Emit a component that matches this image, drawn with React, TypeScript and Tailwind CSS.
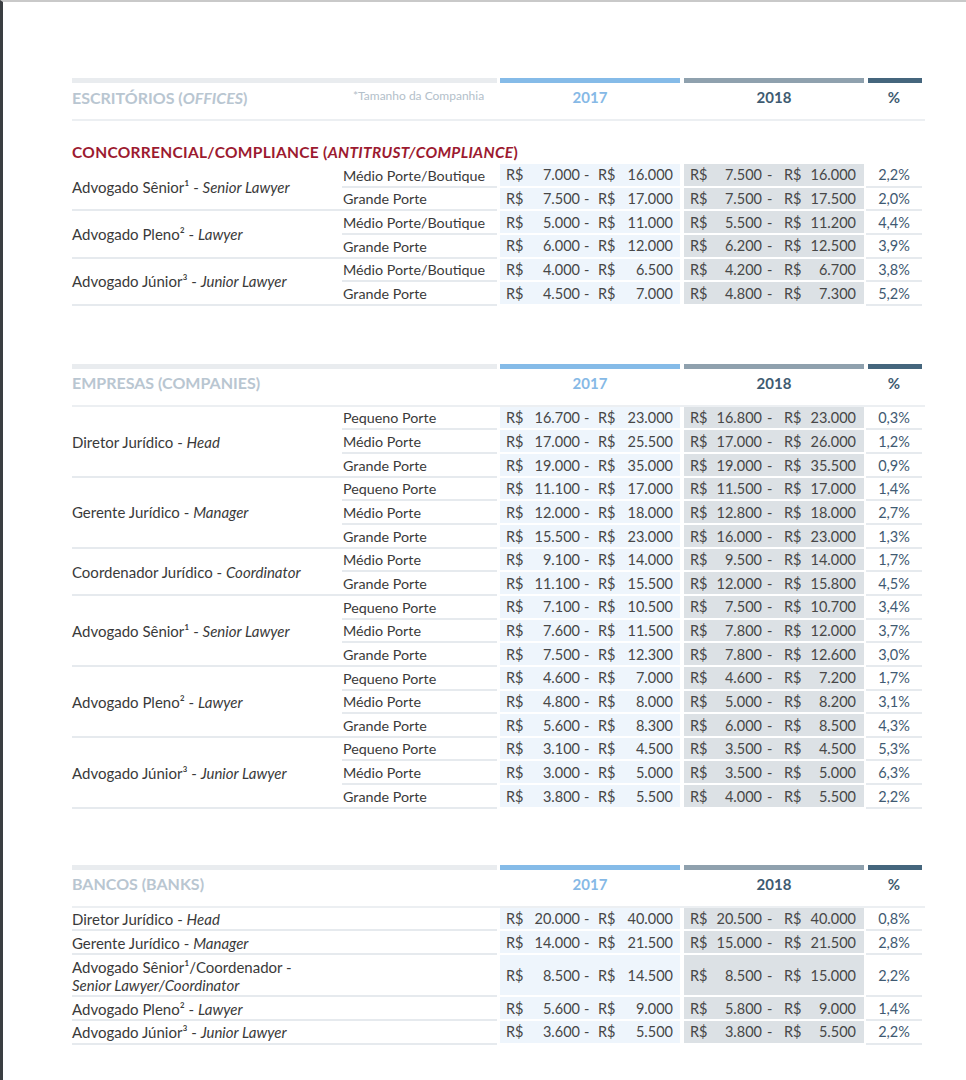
import React from "react";

type Range = [string, string];

interface Item {
  size?: string;
  a: Range;
  b: Range;
  pct: string;
  tall?: boolean;
}

interface Group {
  name: React.ReactNode;
  items: Item[];
}

const font = { fontFamily: "Lato, 'Open Sans', sans-serif" };

function Money({ r, late }: { r: Range; late?: boolean }) {
  // late = the 2018 column, whose figures sit a touch further right
  return (
    <div className="flex items-center pl-[6px] pt-[1px] text-[14.5px] text-[#474747] tabular-nums whitespace-nowrap">
      <span className="w-[16px]">R$</span>
      <span className={`${late ? "w-[56px]" : "w-[58px]"} text-right`}>{r[0]}</span>
      <span className={late ? "w-[22px] pl-[5px]" : "w-[18px] pl-[4px]"}>-</span>
      <span className="w-[16px]">R$</span>
      <span className={`${late ? "w-[56px]" : "w-[59px]"} text-right`}>{r[1]}</span>
    </div>
  );
}

function DataRow({ item }: { item: Item }) {
  const h = item.tall ? "h-[42.3px]" : "h-[23.65px]";
  return (
    <div className={`flex ${h}`}>
      {item.size !== undefined && (
        <div className="w-[155px] flex items-center pl-[1px] pt-[1px] border-b-2 border-[#e6eaee] text-[14.3px] text-[#3a3a3a]">
          {item.size}
        </div>
      )}
      <div className="w-[3px]" />
      <div className="w-[180px] bg-[#eef5fc] border-b-2 border-white flex items-center">
        <Money r={item.a} />
      </div>
      <div className="w-[4px]" />
      <div className="w-[180px] bg-[#dce1e5] border-b-2 border-white flex items-center">
        <Money r={item.b} late />
      </div>
      <div className="w-[2px]" />
      <div className="w-[56px] flex items-center justify-center pt-[1px] border-b-2 border-[#e6eaee] text-[14.5px] text-[#3f5a72] tabular-nums">
        {item.pct}
      </div>
    </div>
  );
}

function GroupBlock({ g }: { g: Group }) {
  return (
    <div className="flex">
      <div className="w-[270px] flex items-center pt-[1px] border-b-2 border-[#e6eaee] text-[15px] text-[#3a3a3a]">
        {g.name}
      </div>
      <div className="flex flex-col">
        {g.items.map((it, i) => (
          <DataRow key={i} item={it} />
        ))}
      </div>
    </div>
  );
}

function SingleRow({ name, item }: { name: React.ReactNode; item: Item }) {
  const h = item.tall ? "h-[42.3px]" : "h-[23.65px]";
  return (
    <div className={`flex ${h}`}>
      <div className="w-[425px] flex flex-col justify-center pt-[1px] border-b-2 border-[#e6eaee] text-[15px] leading-[18px] text-[#3a3a3a]">
        {name}
      </div>
      <DataRow item={item} />
    </div>
  );
}

function SectionHeader({ title, note }: { title: React.ReactNode; note?: string }) {
  return (
    <div className="border-b-2 border-[#eceff2]">
      <div className="flex h-[5px]">
        <div className="w-[425px] bg-[#e9ecef]" />
        <div className="w-[3px]" />
        <div className="w-[180px] bg-[#85bbe8]" />
        <div className="w-[4px]" />
        <div className="w-[180px] bg-[#8fa1ae]" />
        <div className="w-[4px]" />
        <div className="w-[54px] bg-[#45667d]" />
      </div>
      <div className="flex h-[36px] items-center pb-[7px]">
        <div className="w-[281px] text-[16px] font-bold text-[#b9c6d1]">{title}</div>
        <div className="w-[144px] text-[12px] text-[#b3c0ca] -mt-[3px]">{note}</div>
        <div className="w-[3px]" />
        <div className="w-[180px] text-center text-[15px] font-bold text-[#86b9e6]">2017</div>
        <div className="w-[4px]" />
        <div className="w-[180px] text-center text-[15px] font-bold text-[#3e5b71]">2018</div>
        <div className="w-[2px]" />
        <div className="w-[56px] text-center text-[15px] font-bold text-[#3e5b71]">%</div>
      </div>
    </div>
  );
}

const senior = (
  <span>
    Advogado Sênior¹ - <i>Senior Lawyer</i>
  </span>
);
const pleno = (
  <span>
    Advogado Pleno² - <i>Lawyer</i>
  </span>
);
const junior = (
  <span>
    Advogado Júnior³ - <i>Junior Lawyer</i>
  </span>
);
const head = (
  <span>
    Diretor Jurídico - <i>Head</i>
  </span>
);
const manager = (
  <span>
    Gerente Jurídico - <i>Manager</i>
  </span>
);

const offices: Group[] = [
  {
    name: senior,
    items: [
      { size: "Médio Porte/Boutique", a: ["7.000", "16.000"], b: ["7.500", "16.000"], pct: "2,2%" },
      { size: "Grande Porte", a: ["7.500", "17.000"], b: ["7.500", "17.500"], pct: "2,0%" },
    ],
  },
  {
    name: pleno,
    items: [
      { size: "Médio Porte/Boutique", a: ["5.000", "11.000"], b: ["5.500", "11.200"], pct: "4,4%" },
      { size: "Grande Porte", a: ["6.000", "12.000"], b: ["6.200", "12.500"], pct: "3,9%" },
    ],
  },
  {
    name: junior,
    items: [
      { size: "Médio Porte/Boutique", a: ["4.000", "6.500"], b: ["4.200", "6.700"], pct: "3,8%" },
      { size: "Grande Porte", a: ["4.500", "7.000"], b: ["4.800", "7.300"], pct: "5,2%" },
    ],
  },
];

const companies: Group[] = [
  {
    name: head,
    items: [
      { size: "Pequeno Porte", a: ["16.700", "23.000"], b: ["16.800", "23.000"], pct: "0,3%" },
      { size: "Médio Porte", a: ["17.000", "25.500"], b: ["17.000", "26.000"], pct: "1,2%" },
      { size: "Grande Porte", a: ["19.000", "35.000"], b: ["19.000", "35.500"], pct: "0,9%" },
    ],
  },
  {
    name: manager,
    items: [
      { size: "Pequeno Porte", a: ["11.100", "17.000"], b: ["11.500", "17.000"], pct: "1,4%" },
      { size: "Médio Porte", a: ["12.000", "18.000"], b: ["12.800", "18.000"], pct: "2,7%" },
      { size: "Grande Porte", a: ["15.500", "23.000"], b: ["16.000", "23.000"], pct: "1,3%" },
    ],
  },
  {
    name: (
      <span>
        Coordenador Jurídico - <i>Coordinator</i>
      </span>
    ),
    items: [
      { size: "Médio Porte", a: ["9.100", "14.000"], b: ["9.500", "14.000"], pct: "1,7%" },
      { size: "Grande Porte", a: ["11.100", "15.500"], b: ["12.000", "15.800"], pct: "4,5%" },
    ],
  },
  {
    name: senior,
    items: [
      { size: "Pequeno Porte", a: ["7.100", "10.500"], b: ["7.500", "10.700"], pct: "3,4%" },
      { size: "Médio Porte", a: ["7.600", "11.500"], b: ["7.800", "12.000"], pct: "3,7%" },
      { size: "Grande Porte", a: ["7.500", "12.300"], b: ["7.800", "12.600"], pct: "3,0%" },
    ],
  },
  {
    name: pleno,
    items: [
      { size: "Pequeno Porte", a: ["4.600", "7.000"], b: ["4.600", "7.200"], pct: "1,7%" },
      { size: "Médio Porte", a: ["4.800", "8.000"], b: ["5.000", "8.200"], pct: "3,1%" },
      { size: "Grande Porte", a: ["5.600", "8.300"], b: ["6.000", "8.500"], pct: "4,3%" },
    ],
  },
  {
    name: junior,
    items: [
      { size: "Pequeno Porte", a: ["3.100", "4.500"], b: ["3.500", "4.500"], pct: "5,3%" },
      { size: "Médio Porte", a: ["3.000", "5.000"], b: ["3.500", "5.000"], pct: "6,3%" },
      { size: "Grande Porte", a: ["3.800", "5.500"], b: ["4.000", "5.500"], pct: "2,2%" },
    ],
  },
];

const banks: { name: React.ReactNode; item: Item }[] = [
  { name: head, item: { a: ["20.000", "40.000"], b: ["20.500", "40.000"], pct: "0,8%" } },
  { name: manager, item: { a: ["14.000", "21.500"], b: ["15.000", "21.500"], pct: "2,8%" } },
  {
    name: (
      <>
        <span>Advogado Sênior¹/Coordenador -</span>
        <i>Senior Lawyer/Coordinator</i>
      </>
    ),
    item: { a: ["8.500", "14.500"], b: ["8.500", "15.000"], pct: "2,2%", tall: true },
  },
  { name: pleno, item: { a: ["5.600", "9.000"], b: ["5.800", "9.000"], pct: "1,4%" } },
  { name: junior, item: { a: ["3.600", "5.500"], b: ["3.800", "5.500"], pct: "2,2%" } },
];

export default function App() {
  return (
    <div
      className="w-[966px] h-[1080px] overflow-hidden bg-white border-l-[3px] border-l-[#3a3e41] border-t-2 border-t-[#c9c9c9]"
      style={font}
    >
      <div className="pl-[69px] pt-[76px] w-[922px]">
        {/* Escritórios */}
        <SectionHeader
          title={
            <span>
              ESCRITÓRIOS (<i>OFFICES</i>)
            </span>
          }
          note="*Tamanho da Companhia"
        />
        <div className="h-[43px] flex items-end text-[15.5px] font-bold text-[#9c1a30] tracking-[0.3px]">
          <span>
            CONCORRENCIAL/COMPLIANCE (<i>ANTITRUST/COMPLIANCE</i>)
          </span>
        </div>
        {offices.map((g, i) => (
          <GroupBlock key={i} g={g} />
        ))}

        {/* Empresas */}
        <div className="h-[58px]" />
        <SectionHeader title="EMPRESAS (COMPANIES)" />
        {companies.map((g, i) => (
          <GroupBlock key={i} g={g} />
        ))}

        {/* Bancos */}
        <div className="h-[56px]" />
        <SectionHeader title="BANCOS (BANKS)" />
        {banks.map((b, i) => (
          <SingleRow key={i} name={b.name} item={b.item} />
        ))}
      </div>
    </div>
  );
}
